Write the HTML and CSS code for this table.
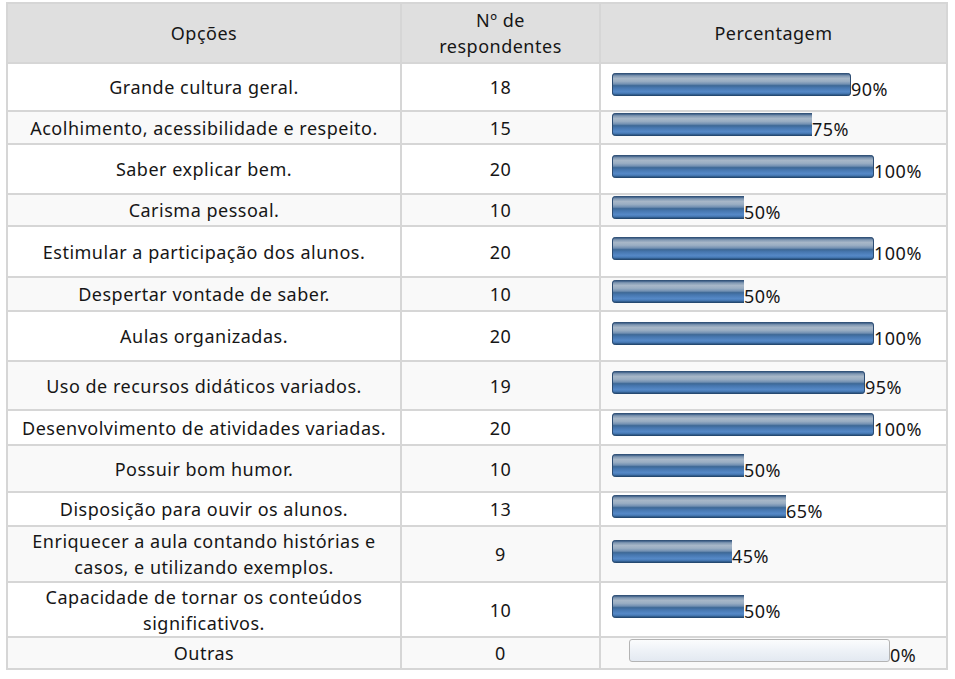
FILE: index.html
```html
<!DOCTYPE html>
<html lang="pt">
<head>
<meta charset="utf-8">
<title>Resultados</title>
<link rel="stylesheet" href="styles.css">
</head>
<body>
<table class="survey">
  <colgroup>
    <col class="col-opt">
    <col class="col-num">
    <col class="col-pct">
  </colgroup>
  <thead>
    <tr class="head">
      <th>Opções</th>
      <th>Nº de<br>respondentes</th>
      <th>Percentagem</th>
    </tr>
  </thead>
  <tbody>
    <tr class="h46"><td>Grande cultura geral.</td><td>18</td><td class="pct"><span class="bar full" style="width:239px"></span>90%</td></tr>
    <tr class="h31 alt"><td>Acolhimento, acessibilidade e respeito.</td><td>15</td><td class="pct"><span class="bar" style="width:200px"></span>75%</td></tr>
    <tr class="h48"><td>Saber explicar bem.</td><td>20</td><td class="pct"><span class="bar full" style="width:262px"></span>100%</td></tr>
    <tr class="h30 alt"><td>Carisma pessoal.</td><td>10</td><td class="pct"><span class="bar" style="width:132px"></span>50%</td></tr>
    <tr class="h49"><td>Estimular a participação dos alunos.</td><td>20</td><td class="pct"><span class="bar full" style="width:262px"></span>100%</td></tr>
    <tr class="h32 alt"><td>Despertar vontade de saber.</td><td>10</td><td class="pct"><span class="bar" style="width:132px"></span>50%</td></tr>
    <tr class="h48"><td>Aulas organizadas.</td><td>20</td><td class="pct"><span class="bar full" style="width:262px"></span>100%</td></tr>
    <tr class="h47 alt"><td>Uso de recursos didáticos variados.</td><td>19</td><td class="pct"><span class="bar full" style="width:253px"></span>95%</td></tr>
    <tr class="h33"><td>Desenvolvimento de atividades variadas.</td><td>20</td><td class="pct"><span class="bar full" style="width:262px"></span>100%</td></tr>
    <tr class="h45 alt"><td>Possuir bom humor.</td><td>10</td><td class="pct"><span class="bar" style="width:132px"></span>50%</td></tr>
    <tr class="h32"><td>Disposição para ouvir os alunos.</td><td>13</td><td class="pct"><span class="bar" style="width:174px"></span>65%</td></tr>
    <tr class="h54 alt"><td>Enriquecer a aula contando histórias e casos, e utilizando exemplos.</td><td>9</td><td class="pct"><span class="bar" style="width:120px"></span>45%</td></tr>
    <tr class="h53"><td>Capacidade de tornar os conteúdos significativos.</td><td>10</td><td class="pct"><span class="bar" style="width:132px"></span>50%</td></tr>
    <tr class="h30 alt"><td>Outras</td><td>0</td><td class="pct"><span class="bar empty"></span>0%</td></tr>
  </tbody>
</table>
</body>
</html>
```

FILE: styles.css
```css
html, body {
  margin: 0;
  padding: 0;
  background: #ffffff;
}

body {
  font-family: "Noto Sans", "Open Sans", "DejaVu Sans", sans-serif;
  font-size: 18px;
  letter-spacing: 0.5px;
  color: #161616;
}

.survey {
  margin: 2px 0 0 6px;
  width: 942px;
  table-layout: fixed;
  border-collapse: separate;
  border-spacing: 2px;
  background: #d6d6d6;
}

.col-opt { width: 392px; }
.col-num { width: 197px; }
.col-pct { width: 345px; }

.survey th,
.survey td {
  padding: 0 4px;
  line-height: 26px;
  text-align: center;
  vertical-align: middle;
  font-weight: normal;
  background: #ffffff;
}

.survey .head th {
  height: 58px;
  background: #dfdfdf;
}

.survey tr.alt td {
  background: #f9f9f9;
}

.survey td.pct {
  text-align: left;
  padding-left: 11px;
  white-space: nowrap;
}

.h30 td { height: 30px; }
.h31 td { height: 31px; }
.h32 td { height: 32px; }
.h33 td { height: 33px; }
.h45 td { height: 45px; }
.h46 td { height: 46px; }
.h47 td { height: 47px; }
.h48 td { height: 48px; }
.h49 td { height: 49px; }
.h53 td { height: 53px; }
.h54 td { height: 54px; }

.bar {
  display: inline-block;
  height: 23px;
  box-sizing: border-box;
  border-radius: 4px 0 0 4px;
  box-shadow: inset 1px 0 0 #2c4c72;
  background: linear-gradient(to bottom,
    #2b4a6e 0,
    #3f6088 5%,
    #7f97b2 12%,
    #a7b7c8 24%,
    #9aaec3 36%,
    #7290b2 48%,
    #3d6896 55%,
    #4676ae 64%,
    #5588c6 80%,
    #4a7db9 88%,
    #2c5684 95%,
    #1f3f62 100%);
}

.bar.full {
  border-radius: 4px;
  box-shadow: inset 1px 0 0 #2c4c72, inset -1px 0 0 #2c4c72;
}

.bar.empty {
  width: 261px;
  margin-left: 17px;
  border: 1px solid #b4b4b4;
  border-radius: 3px;
  box-shadow: none;
  background: linear-gradient(to bottom, #fbfcfd 0, #eef2f7 50%, #e3e9f1 100%);
}
```
